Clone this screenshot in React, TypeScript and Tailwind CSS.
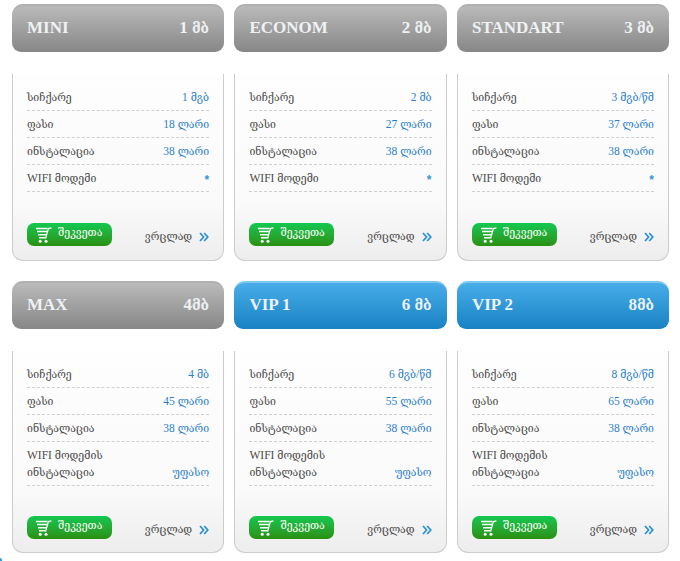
import { Fragment } from "react";

type Row = { label: string; label2?: string; value: string };
type Plan = { name: string; price: string; blue?: boolean; speed: string; fee: string; last: Row };

const wifi: Row = { label: "WIFI მოდემი", value: "*" };
const wifi2: Row = { label: "WIFI მოდემის", label2: "ინსტალაცია", value: "უფასო" };

const plans: Plan[] = [
  { name: "MINI", price: "1 მბ", speed: "1 მგბ", fee: "18 ლარი", last: wifi },
  { name: "ECONOM", price: "2 მბ", speed: "2 მბ", fee: "27 ლარი", last: wifi },
  { name: "STANDART", price: "3 მბ", speed: "3 მგბ/წმ", fee: "37 ლარი", last: wifi },
  { name: "MAX", price: "4მბ", speed: "4 მბ", fee: "45 ლარი", last: wifi2 },
  { name: "VIP 1", price: "6 მბ", blue: true, speed: "6 მგბ/წმ", fee: "55 ლარი", last: wifi2 },
  { name: "VIP 2", price: "8მბ", blue: true, speed: "8 მგბ/წმ", fee: "65 ლარი", last: wifi2 },
];

// Latin and digits use a Times-metric face, Georgian a smaller DejaVu Serif.
function Mixed({ text, big }: { text: string; big?: boolean }) {
  const parts = text.split(/([\u10A0-\u10FF]+)/).filter(Boolean);
  return (
    <>
      {parts.map((p, i) => (
        <Fragment key={i}>
          {/[\u10A0-\u10FF]/.test(p) ? (
            <span className={big ? "font-['DejaVu_Serif',serif] text-[13.5px]" : "font-['DejaVu_Serif',serif] text-[10.5px]"}>{p}</span>
          ) : (
            <span className={big ? "font-['Liberation_Serif',serif] text-[17px]" : "font-['Liberation_Serif',serif] text-[11.5px]"}>{p}</span>
          )}
        </Fragment>
      ))}
    </>
  );
}

function CartIcon() {
  return (
    <svg width="18" height="16" viewBox="0 0 18 16" fill="none" className="shrink-0">
      <path d="M0 1.5H11.5M1 4.6H11M2 7.7H10.2M3 10.8H9.5" stroke="#fff" strokeWidth="1.5" />
      <path d="M9.6 11.5L12.4 1.6L15.4 0.8" stroke="#fff" strokeWidth="1.2" />
      <circle cx="4.2" cy="14.2" r="1.5" fill="#fff" />
      <circle cx="10" cy="14.2" r="1.5" fill="#fff" />
    </svg>
  );
}

function DoubleArrow() {
  return (
    <svg width="10" height="10" viewBox="0 0 10 10" fill="none" stroke="#2a8fd0" strokeWidth="1.7">
      <path d="M1 1L4.6 5L1 9M5.2 1L8.8 5L5.2 9" />
    </svg>
  );
}

function DataRow({ label, label2, value, first }: Row & { first?: boolean }) {
  const isStar = value === "*";
  return (
    <div
      className={`flex items-end justify-between border-b border-dashed border-[#d0d0d0] pb-[4px] leading-[17px] ${
        first ? "pt-[6px]" : "pt-[5px]"
      }`}
    >
      <div className="text-[#4a4a4a]">
        <div>
          <Mixed text={label} />
        </div>
        {label2 && (
          <div>
            <Mixed text={label2} />
          </div>
        )}
      </div>
      {isStar ? (
        <div className="h-[15px] font-['Liberation_Sans',sans-serif] text-[12px] font-bold text-[#3a94d6]">*</div>
      ) : (
        <div className="text-[#2a7fc9]">
          <Mixed text={value} />
        </div>
      )}
    </div>
  );
}

function Card({ plan }: { plan: Plan }) {
  const tall = !!plan.last.label2;
  return (
    <div className="flex flex-col">
      <div
        className={`flex h-[48px] items-center justify-between rounded-t-[11px] rounded-b-[9px] border-t-2 px-[15px] pb-[2px] text-[13px] font-bold text-[#eef2f4] ${
          plan.blue
            ? "border-[#7cc6f0] bg-gradient-to-b from-[#46ade9] to-[#1782c4]"
            : "border-[#b0b0b0] bg-gradient-to-b from-[#bababa] to-[#878787]"
        }`}
      >
        <span>
          <Mixed text={plan.name} big />
        </span>
        <span>
          <Mixed text={plan.price} big />
        </span>
      </div>
      <div
        className={`mt-[22px] flex grow flex-col rounded-b-[11px] border-x border-b border-[#cccccc] bg-gradient-to-b from-[#fefefe] via-[#fafafa] via-70% to-[#ededed] px-[14px] pt-[9px] text-[10px] ${
          tall ? "pb-[13px]" : "pb-[14px]"
        }`}
      >
        <DataRow first label="სიჩქარე" value={plan.speed} />
        <DataRow label="ფასი" value={plan.fee} />
        <DataRow label="ინსტალაცია" value="38 ლარი" />
        <DataRow {...plan.last} />
        <div className={`flex items-center justify-between ${tall ? "mt-[30px]" : "mt-[31px]"}`}>
          <button className="flex h-[23px] w-[85px] items-center gap-[4px] rounded-[7px] bg-gradient-to-b from-[#10c850] to-[#2a9010] pl-[9px] text-white">
            <CartIcon />
            <span className="mt-[-3px]">
              <Mixed text="შეკვეთა" />
            </span>
          </button>
          <div className="flex items-center gap-[7px] pt-[5px] text-[#4a4a4a]">
            <span>
              <Mixed text="ვრცლად" />
            </span>
            <DoubleArrow />
          </div>
        </div>
      </div>
    </div>
  );
}

export default function App() {
  return (
    <div className="relative h-[561px] w-[680px] overflow-hidden bg-white pl-[12px] pt-[4px]">
      <div className="grid w-[657px] grid-cols-3 gap-x-[10.4px] gap-y-[20px]">
        {plans.map((p) => (
          <Card key={p.name} plan={p} />
        ))}
      </div>
      <div className="absolute bottom-0 left-0 h-[3px] w-[2px] rounded-tr-[2px] bg-[#2a9fe0]" />
    </div>
  );
}
